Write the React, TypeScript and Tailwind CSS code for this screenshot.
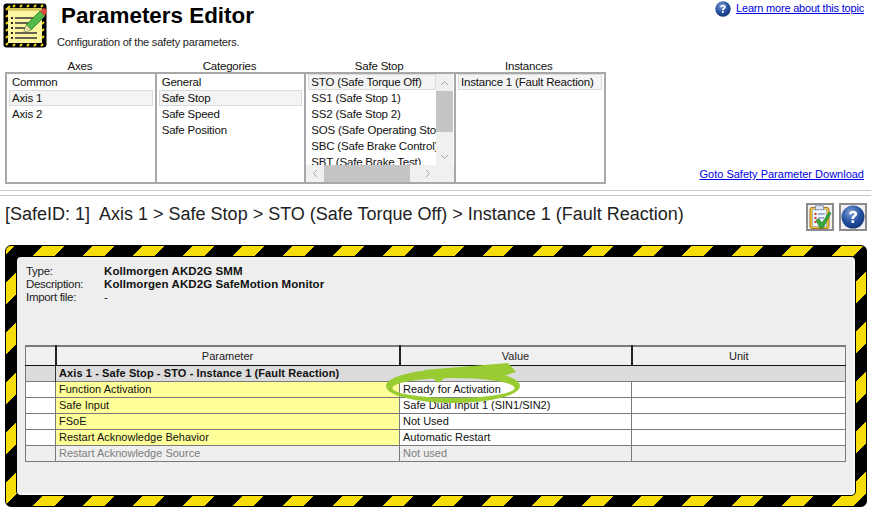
import React from "react";

const font = "font-['Liberation_Sans',Arial,sans-serif]";

const axes = ["Common", "Axis 1", "Axis 2"];
const categories = ["General", "Safe Stop", "Safe Speed", "Safe Position"];
const stops = [
  "STO (Safe Torque Off)",
  "SS1 (Safe Stop 1)",
  "SS2 (Safe Stop 2)",
  "SOS (Safe Operating Stop)",
  "SBC (Safe Brake Control)",
  "SBT (Safe Brake Test)",
];

const rows = [
  { name: "Function Activation", value: "Ready for Activation" },
  { name: "Safe Input", value: "Safe Dual Input 1 (SIN1/SIN2)" },
  { name: "FSoE", value: "Not Used" },
  { name: "Restart Acknowledge Behavior", value: "Automatic Restart" },
  { name: "Restart Acknowledge Source", value: "Not used", off: true },
];

function HeaderIcon() {
  return (
    <svg width="44" height="45" viewBox="0 0 44 45" className="shrink-0">
      <rect x="0.5" y="0.5" width="43" height="44" rx="3" fill="#000" />
      <g stroke="#f5d90a" strokeWidth="2">
        <path d="M3 7l4-4M10 4l2-2M17 4l2-2M24 4l2-2M31 4l2-2M38 4l2-2M3 14l2-2M3 21l2-2M3 28l2-2M3 35l2-2M3 42l2-2M10 43l2-2M17 43l2-2M24 43l2-2M31 43l2-2M38 43l2-2M39 14l2-2M39 21l2-2M39 28l2-2M39 35l2-2" />
      </g>
      <rect x="5" y="5" width="34" height="35" fill="#fdf6a0" />
      <rect x="5" y="5" width="34" height="3" fill="#d8c860" />
      <path d="M8 14h2v2H8zM8 19h2v2H8zM8 24h2v2H8zM8 29h2v2H8zM8 34h2v2H8z" fill="#222" />
      <path d="M12 15h20M12 20h18M12 25h16M12 30h22M12 35h22" stroke="#333" strokeWidth="1.4" />
      <path d="M21 29l2-7L37 8l5 5-14 14z" fill="#52b848" stroke="#2d7a2a" strokeWidth="0.8" />
      <path d="M37 8l2-2c1-1 3-1 4 0s1 3 0 4l-1 3z" fill="#e04a3a" />
      <path d="M21 29l2-7 5 5z" fill="#f3d7a8" />
    </svg>
  );
}

function HelpIcon({ size }: { size: number }) {
  return (
    <svg width={size} height={size} viewBox="0 0 24 24">
      <defs>
        <radialGradient id={`help${size}`} cx="0.4" cy="0.3" r="0.8">
          <stop offset="0%" stopColor="#7f9fd8" />
          <stop offset="55%" stopColor="#24509f" />
          <stop offset="100%" stopColor="#12306f" />
        </radialGradient>
      </defs>
      <circle cx="12" cy="12" r="11.5" fill={`url(#help${size})`} />
      <path
        d="M8 9.2c.2-2.2 1.900-3.500 4.200-3.500 2.400 0 4 1.300 4 3.200 0 2.600-3.100 2.700-3.100 5h-2.600c0-3.200 2.800-3.400 2.800-4.900 0-.7-.5-1.100-1.200-1.100-.8 0-1.300.5-1.400 1.400z"
        fill="#fff"
      />
      <rect x="10.5" y="15.2" width="2.7" height="2.7" fill="#fff" />
    </svg>
  );
}

function ClipboardIcon() {
  return (
    <svg width="24" height="25" viewBox="0 0 24 25">
      <rect x="2" y="2.5" width="19" height="21" rx="2" fill="#f3c43a" stroke="#a8751a" />
      <rect x="4.5" y="4.5" width="14" height="17" fill="#f4f8ff" stroke="#7c97c2" strokeWidth="0.6" />
      <rect x="7.5" y="0.8" width="8" height="4" fill="#dfe7f4" stroke="#6a7ea8" strokeWidth="0.7" />
      <path d="M6.500 8h2v2h-2zM6.500 12h2v2h-2zM6.500 16h2v2h-2z" fill="#c8332a" />
      <path d="M10 9h7M10 13h6M10 17h3" stroke="#4470b8" strokeWidth="1.2" />
      <path d="M8 15l3-1 3 4 7-11 2 1-8 15h-3z" fill="#35a83a" stroke="#1e6f26" strokeWidth="0.6" />
    </svg>
  );
}

function ListColumn({ title, items, selected }: { title: string; items: string[]; selected: number }) {
  return (
    <div className="w-[149.67px] flex flex-col">
      <div className="h-[15px] text-center text-[11.5px] tracking-[-0.2px] leading-[18px] text-[#111]">{title}</div>
      <div className="h-[112px] border-2 border-[#a8a8a8] bg-white px-[2px] -mr-[2px] w-[151.67px] overflow-hidden">
        {items.map((item, i) => (
          <div
            key={item}
            className={`h-[16px] pl-[3px] text-[11.5px] tracking-[-0.2px] leading-[16px] whitespace-nowrap text-[#111] ${
              i === selected ? "bg-[#f4f4f4] outline outline-1 -outline-offset-1 outline-[#dcdcdc]" : ""
            }`}
          >
            {item}
          </div>
        ))}
      </div>
    </div>
  );
}

function StopColumn() {
  return (
    <div className="w-[149.67px] flex flex-col">
      <div className="h-[15px] text-center text-[11.5px] tracking-[-0.2px] leading-[18px] text-[#111]">Safe Stop</div>
      <div className="h-[112px] w-[151.67px] -mr-[2px] border-2 border-[#a8a8a8] bg-white flex flex-col overflow-hidden">
        <div className="flex h-[91px]">
          <div className="w-[130px] pl-[2px] overflow-hidden">
            {stops.map((s, i) => (
              <div
                key={s}
                className={`h-[16px] pl-[3px] text-[11.5px] tracking-[-0.2px] leading-[16px] whitespace-nowrap text-[#111] ${
                  i === 0 ? "bg-[#f4f4f4] outline outline-1 -outline-offset-1 outline-[#dcdcdc]" : ""
                }`}
              >
                {s}
              </div>
            ))}
          </div>
          <div className="w-[17px] bg-[#f0f0f0] flex flex-col items-center">
            <div className="h-[17px] flex items-center justify-center text-[#a6a6a6]">
              <svg width="9" height="6" viewBox="0 0 9 6"><path d="M1 5l3.500-3.500L8 5" fill="none" stroke="currentColor" /></svg>
            </div>
            <div className="w-full h-[41px] bg-[#c4c4c4]" />
            <div className="flex-1 flex items-end pb-[5px] text-[#a6a6a6]">
              <svg width="9" height="6" viewBox="0 0 9 6"><path d="M1 1l3.500 3.500L8 1" fill="none" stroke="currentColor" /></svg>
            </div>
          </div>
        </div>
        <div className="h-[17px] bg-[#f0f0f0] flex items-center">
          <div className="w-[18px] flex justify-center text-[#a6a6a6]">
            <svg width="6" height="9" viewBox="0 0 6 9"><path d="M5 1L1.500 4.500 5 8" fill="none" stroke="currentColor" /></svg>
          </div>
          <div className="w-[86px] h-full bg-[#c4c4c4]" />
          <div className="w-[35px] flex justify-center text-[#a6a6a6]">
            <svg width="6" height="9" viewBox="0 0 6 9"><path d="M1 1l3.500 3.500L1 8" fill="none" stroke="currentColor" /></svg>
          </div>
        </div>
      </div>
    </div>
  );
}

function ParamTable() {
  return (
    <table className="table-fixed border-collapse w-[820px] text-[11px] leading-[14px] border border-t-2 border-[#7a7a7a]">
      <colgroup>
        <col className="w-[30px]" />
        <col className="w-[344px]" />
        <col className="w-[232px]" />
        <col className="w-[214px]" />
      </colgroup>
      <thead>
        <tr className="h-[19px] bg-[#f0f0f0] border-b border-[#111]">
          <th className="p-0 border-r-2 border-[#222]" />
          <th className="p-0 border-r-2 border-[#222] font-normal text-[#222] text-center">Parameter</th>
          <th className="p-0 border-r-2 border-[#222] font-normal text-[#222] text-center">Value</th>
          <th className="p-0 font-normal text-[#222] text-center">Unit</th>
        </tr>
      </thead>
      <tbody>
        <tr className="h-[16px] bg-[#dcdcdc] border-b border-[#7a7a7a]">
          <td className="p-0 border-r border-[#333]" />
          <td colSpan={3} className="p-0 pl-[3px] font-bold tracking-[0.1px] text-[#111] whitespace-nowrap">
            Axis 1 - Safe Stop - STO - Instance 1 (Fault Reaction)
          </td>
        </tr>
        {rows.map((r) => (
          <tr key={r.name} className={`h-[16px] border-b border-[#7a7a7a] ${r.off ? "bg-[#efefef]" : "bg-white"}`}>
            <td className="p-0 border-r border-[#7a7a7a]" />
            <td className={`p-0 border-r border-[#7a7a7a] pl-[3px] ${r.off ? "text-[#7d7d7d]" : "bg-[#ffff99] text-[#111]"}`}>{r.name}</td>
            <td className={`p-0 border-r border-[#7a7a7a] pl-[3px] ${r.off ? "text-[#7d7d7d]" : "text-[#111]"}`}>{r.value}</td>
            <td className="p-0" />
          </tr>
        ))}
      </tbody>
    </table>
  );
}

export default function App() {
  return (
    <div className={`${font} relative w-[871px] h-[513px] bg-white overflow-hidden`}>
      <div className="flex h-[57px] pl-[3px] pt-[3px]">
        <HeaderIcon />
        <div className="flex flex-col ml-[10px]">
          <h1 className="ml-[4px] text-[22.4px] leading-[26px] font-bold text-black">Parameters Editor</h1>
          <p className="mt-[6px] text-[11px] tracking-[-0.2px] leading-[14px] text-[#222]">Configuration of the safety parameters.</p>
        </div>
        <div className="ml-auto mr-[7px] -mt-[2px] flex items-start gap-[5px]">
          <HelpIcon size={16} />
          <a className="text-[11px] tracking-[-0.2px] leading-[14px] text-[#0000e0] underline">Learn more about this topic</a>
        </div>
      </div>

      <div className="flex h-[127px] pl-[5px]">
        <ListColumn title="Axes" items={axes} selected={1} />
        <ListColumn title="Categories" items={categories} selected={1} />
        <StopColumn />
        <ListColumn title="Instances" items={["Instance 1 (Fault Reaction)"]} selected={0} />
        <div className="flex-1 flex items-end justify-end pr-[7px] pb-[3px]">
          <a className="text-[11px] leading-[14px] text-[#0000e0] underline">Goto Safety Parameter Download</a>
        </div>
      </div>

      <div className="mt-[6px] h-[6px] border-y border-[#c8c8c8]" />

      <div className="flex items-center h-[38px] pl-[5px] pr-[4px] mt-[2px]">
        <div className="mb-[6px] text-[18px] leading-[20px] text-[#222] whitespace-pre">{"[SafeID: 1]  Axis 1 > Safe Stop > STO (Safe Torque Off) > Instance 1 (Fault Reaction)"}</div>
        <div className="ml-auto flex gap-[5px]">
          <button className="w-[28px] h-[28px] border-2 border-[#8c8c8c] bg-[#f0f0f0] flex items-center justify-center"><ClipboardIcon /></button>
          <button className="w-[28px] h-[28px] border-2 border-[#8c8c8c] bg-[#f0f0f0] flex items-center justify-center"><HelpIcon size={24} /></button>
        </div>
      </div>

      <div className="mt-[9px] ml-[5px] w-[862px] h-[262px] p-[11px] rounded-[6px] border border-black bg-[repeating-linear-gradient(135deg,#f5dc0a_0,#f5dc0a_5.66px,#000_5.66px,#000_25.46px,#f5dc0a_25.46px,#f5dc0a_35.355px)]">
        <div className="w-full h-full bg-[#eeeeee] rounded-[4px] shadow-[0_0_0_1px_#000] border-r-2 border-b-2 border-[#f8f8f8] pl-[8px] pt-[8px]">
          <div className="ml-[1px] grid grid-cols-[78px_1fr] auto-rows-[13px] text-[11.5px] leading-[13px] h-[80px]">
            <span className="tracking-[-0.3px] text-[#222]">Type:</span>
            <span className="font-bold tracking-[0.08px] text-[#111]">Kollmorgen AKD2G SMM</span>
            <span className="tracking-[-0.3px] text-[#222]">Description:</span>
            <span className="font-bold tracking-[0.08px] text-[#111]">Kollmorgen AKD2G SafeMotion Monitor</span>
            <span className="tracking-[-0.3px] text-[#222]">Import file:</span>
            <span className="text-[#111]">-</span>
          </div>
          <ParamTable />
        </div>
      </div>

      <svg className="absolute left-[380px] top-[358px]" width="150" height="50" viewBox="0 0 150 50">
        <path
          fillRule="evenodd"
          fill="#99cc33"
          d="M6 28a67 17 0 1 0 134 0a67 17 0 1 0-134 0zM12.500 30a61 10 0 1 0 122 0a61 10 0 1 0-122 0z"
        />
        <path d="M44 12L128 5l8 9-16 5-54 0-8 6z" fill="#99cc33" />
      </svg>
    </div>
  );
}
